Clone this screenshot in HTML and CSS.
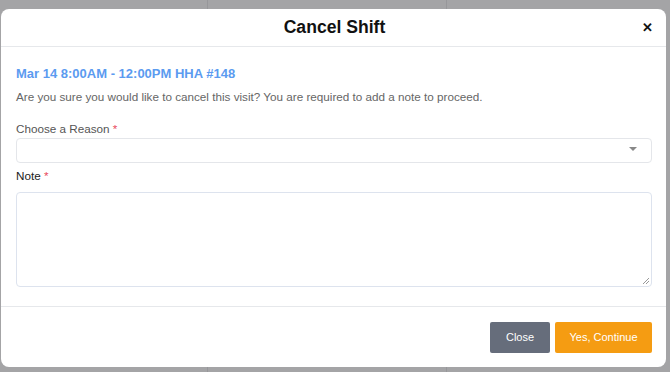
FILE: index.html
```html
<!DOCTYPE html>
<html>
<head>
    <title>Cancel Shift</title>
    <link rel="stylesheet" href="styles.css">
</head>
<body>
    <div class="backdrop">
        <div class="modal">
            <div class="modal-header">
                <h3>Cancel Shift</h3>
                <span class="close-x">&#x2715;</span>
            </div>

            <div class="modal-body">
                <div class="shift-title">Mar 14 8:00AM - 12:00PM HHA #148</div>
                <p class="shift-text">Are you sure you would like to cancel this visit? You are required to add a note to proceed.</p>

                <label class="field-label">Choose a Reason <span class="req">*</span></label>
                <div class="select-box">
                    <span class="caret"></span>
                </div>

                <label class="field-label note-label">Note <span class="req">*</span></label>
                <div class="note-box">
                    <svg class="grip" width="8" height="8" viewBox="0 0 8 8">
                        <path d="M7 1L1 7M7 4L4 7" stroke="#999" stroke-width="1"/>
                    </svg>
                </div>
            </div>

            <div class="modal-footer">
                <button class="btn btn-close">Close</button>
                <button class="btn btn-continue">Yes, Continue</button>
            </div>
        </div>
    </div>
</body>
</html>
```

FILE: styles.css
```css
* {
    margin: 0;
    padding: 0;
    box-sizing: border-box;
    font-family: 'Liberation Sans', Arial, sans-serif;
}

body {
    width: 670px;
    height: 372px;
    overflow: hidden;
    background-color: #a4a4a6;
    background-image:
        linear-gradient(90deg, transparent 207px, #97979a 207px, #97979a 208px, transparent 208px),
        linear-gradient(90deg, transparent 446px, #97979a 446px, #97979a 447px, transparent 447px);
}

.backdrop {
    padding: 9px 4px 0 1px;
}

.modal {
    background: white;
    border-radius: 8px;
    height: 358px;
    display: flex;
    flex-direction: column;
}

.modal-header {
    height: 38px;
    border-bottom: 1px solid #e6e8eb;
    display: flex;
    align-items: center;
    justify-content: center;
    position: relative;
}

.modal-header h3 {
    font-size: 17.6px;
    font-weight: bold;
    color: #111;
    margin-left: 2px;
}

.close-x {
    position: absolute;
    right: 13px;
    top: 11px;
    font-size: 13px;
    font-weight: bold;
    color: #111;
}

.modal-body {
    padding: 19px 14px 0 15px;
    flex: 1;
}

.shift-title {
    color: #5b9bf0;
    font-size: 13px;
    font-weight: bold;
    line-height: 16px;
}

.shift-text {
    color: #666;
    font-size: 11.7px;
    line-height: 16px;
    margin-top: 7px;
}

.field-label {
    display: block;
    color: #555;
    font-size: 11.7px;
    line-height: 16px;
    margin-top: 16px;
}

.note-label {
    color: #222;
    margin-top: 5px;
}

.req {
    color: #e8475a;
}

.select-box {
    height: 25px;
    border: 1px solid #e4e6ea;
    border-radius: 4px;
    margin-top: 1px;
    position: relative;
}

.caret {
    position: absolute;
    right: 14px;
    top: 8px;
    border-left: 4px solid transparent;
    border-right: 4px solid transparent;
    border-top: 4px solid #888;
}

.note-box {
    height: 95px;
    border: 1px solid #dde3ee;
    border-radius: 4px;
    margin-top: 8px;
    position: relative;
}

.grip {
    position: absolute;
    right: 1px;
    bottom: 1px;
}

.modal-footer {
    height: 61px;
    border-top: 1px solid #e6e8eb;
    display: flex;
    justify-content: flex-end;
    align-items: center;
    gap: 5px;
    padding-right: 14px;
}

.btn {
    height: 31px;
    border: none;
    border-radius: 2px;
    color: white;
    font-size: 11px;
    cursor: pointer;
}

.btn-close {
    width: 60px;
    background: #666d7b;
}

.btn-continue {
    width: 97px;
    background: #f59c12;
}
```
